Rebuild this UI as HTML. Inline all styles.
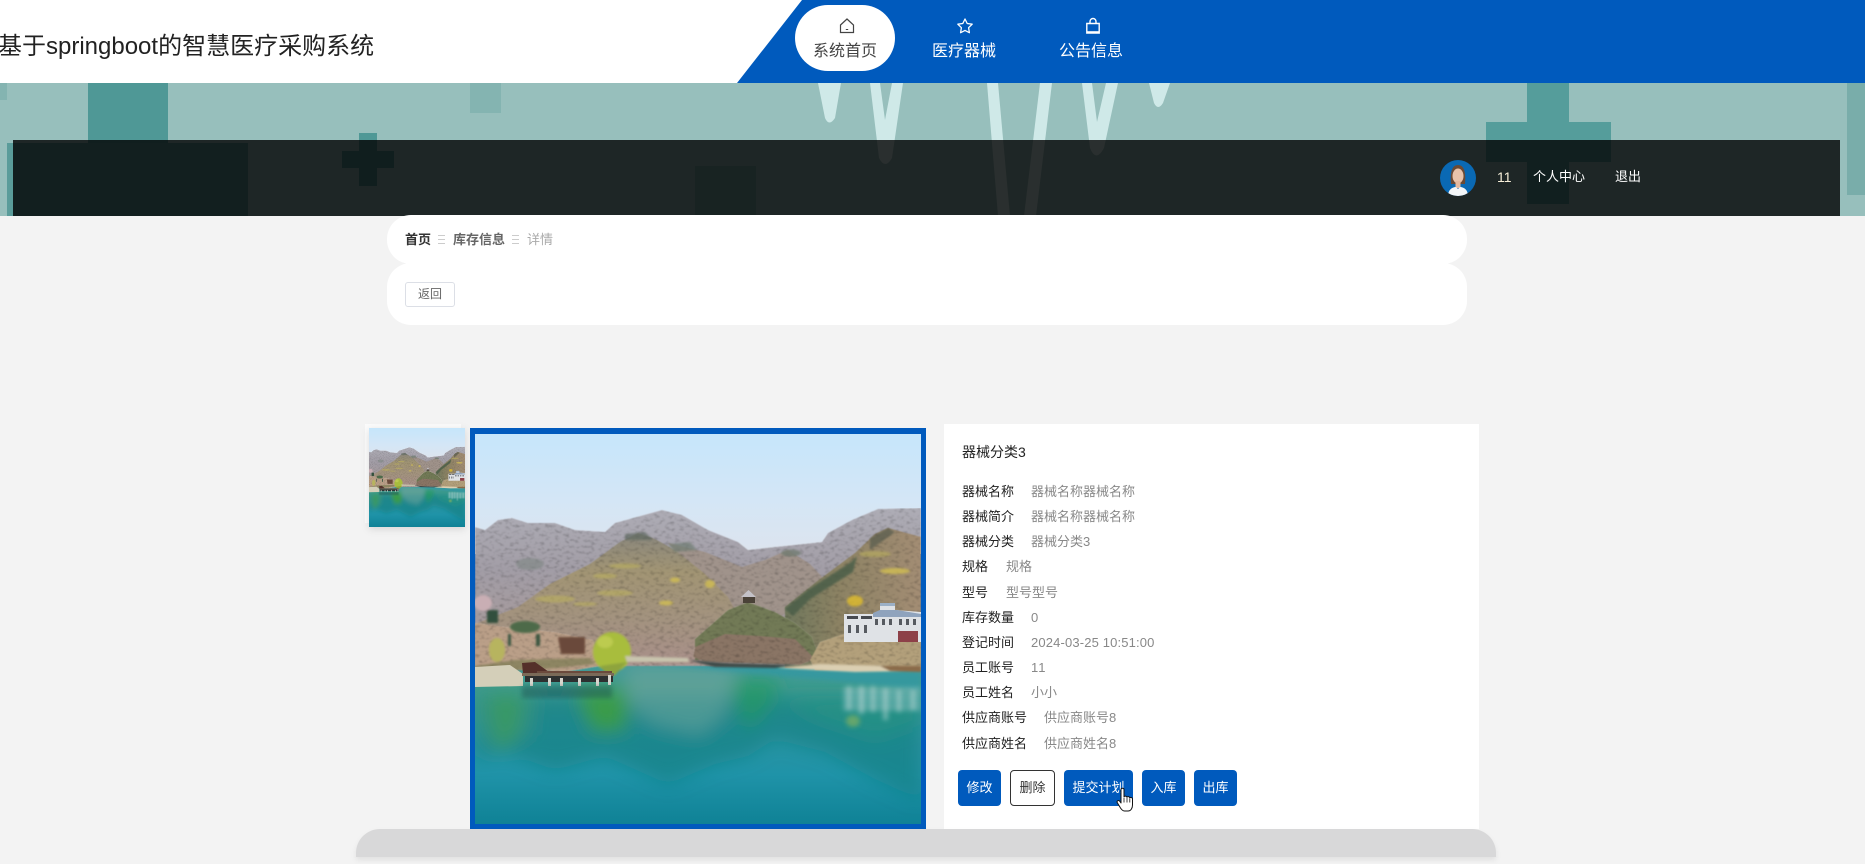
<!DOCTYPE html>
<html lang="zh">
<head>
<meta charset="utf-8">
<title>基于springboot的智慧医疗采购系统</title>
<style>
html,body{margin:0;padding:0;width:1865px;height:864px;overflow:hidden;background:#f3f3f3;}
body{position:relative;font-family:"Liberation Sans","Noto Sans CJK SC",sans-serif;}
.a{position:absolute;white-space:nowrap;}
svg{display:block;}
.nav{font-size:16px;line-height:22px;top:41px;color:#fff;}
.lb,.vl{font-size:13px;line-height:20px;}
.lb{left:962px;color:#222;}
.vl{color:#888;}
.btn{top:770px;height:36px;line-height:35px;text-align:center;font-size:13px;border-radius:4px;background:#005abd;color:#fff;box-sizing:border-box;}
</style>
</head>
<body>

<!-- hero -->
<div class="a" style="left:0;top:83px;width:1865px;height:133px;overflow:hidden;background:#97bfbc;">
<svg width="1865" height="133" viewBox="0 83 1865 133" style="position:absolute;left:0;top:0">
<rect x="0" y="83" width="7" height="17" fill="#84b4b1"/>
<rect x="88" y="83" width="80" height="62" fill="#4f9896"/>
<rect x="7" y="143" width="241" height="73" fill="#5a9c9a"/>
<rect x="470" y="83" width="31" height="30" fill="#84b4b1"/>
<rect x="359" y="133" width="18" height="53" fill="#4f9896"/>
<rect x="342" y="151" width="52" height="17" fill="#4f9896"/>
<rect x="695" y="166" width="61" height="50" fill="#4f9896" opacity=".45"/>
<rect x="1527" y="83" width="42" height="121" fill="#559d9b"/>
<rect x="1486" y="122" width="125" height="40" fill="#559d9b"/>
<rect x="1847" y="83" width="18" height="112" fill="#79adaa"/>
<g fill="#cfe9e8">
<path d="M818 83H841L835 118Q829 127 825 118Z"/>
<path d="M870 83H880L885 120L892 83H903L892 158Q885 170 879 158Z"/>
<path d="M987 83H998L1010 216H998Z"/>
<path d="M1040 83H1052L1036 216H1024Z"/>
<path d="M1082 83H1092L1097 122L1106 83H1118L1104 148Q1096 163 1090 148Z"/>
<path d="M1149 83H1170L1163 103Q1158 111 1154 103Z"/>
</g>
</svg>
<div class="a" style="left:13px;top:57px;width:1827px;height:76px;background:rgba(0,0,0,.8);"></div>
</div>

<!-- header -->
<div class="a" style="left:0;top:0;width:1865px;height:83px;background:#fff;"></div>
<svg class="a" style="left:0;top:0" width="1865" height="83"><polygon points="802,0 1865,0 1865,83 737,83" fill="#005abd"/></svg>
<div class="a" style="left:-2px;top:30px;font-size:24px;line-height:34px;color:#222;">基于springboot的智慧医疗采购系统</div>

<div class="a" style="left:795px;top:5px;width:100px;height:66px;border-radius:33px;background:#fff;"></div>
<svg class="a" style="left:838px;top:17px" width="18" height="18" viewBox="0 0 18 18" fill="none" stroke="#444" stroke-width="1.2"><path d="M2.500 8 9 2l6.500 6v7.500h-13z"/><path d="M7.800 12.500h2.400" stroke-width="1"/></svg>
<svg class="a" style="left:956px;top:17px" width="18" height="18" viewBox="0 0 18 18" fill="none" stroke="#fff" stroke-width="1.300" stroke-linejoin="round"><path d="M9 2l2.200 4.500 5 .7-3.600 3.500.8 5L9 13.400 4.600 15.700l.8-5L1.800 7.200l5-.7z"/></svg>
<svg class="a" style="left:1084px;top:17px" width="18" height="18" viewBox="0 0 18 18" fill="none" stroke="#fff" stroke-width="1.400"><path d="M2.800 6.500h12.400v9.500H2.800z"/><path d="M6 6.500V4.500a3 3 0 0 1 6 0v2"/><path d="M3 15h12" stroke-width="1.600"/></svg>
<div class="a nav" style="left:813px;color:#444;">系统首页</div>
<div class="a nav" style="left:932px;">医疗器械</div>
<div class="a nav" style="left:1059px;">公告信息</div>

<!-- user -->
<svg class="a" style="left:1440px;top:160px" width="36" height="36" viewBox="0 0 36 36">
<defs><clipPath id="av"><circle cx="18" cy="18" r="18"/></clipPath></defs>
<g clip-path="url(#av)">
<rect width="36" height="36" fill="#0a69b4"/>
<path d="M11 24C10 12 12 5 18 5s8 7 7 19z" fill="#6b4a35"/>
<ellipse cx="18" cy="16" rx="5.500" ry="7.500" fill="#e8c3ab"/>
<rect x="15.500" y="21" width="5" height="7" fill="#e3b9a0"/>
<path d="M8 36c0-6 4-9 8-9l2 2 2-2c4 0 8 3 8 9z" fill="#f4f6f8"/>
</g>
</svg>
<div class="a" style="left:1497px;top:167px;font-size:14px;line-height:20px;color:#f7efd9;">11</div>
<div class="a" style="left:1533px;top:167px;font-size:13px;line-height:20px;color:#fff;">个人中心</div>
<div class="a" style="left:1615px;top:167px;font-size:13px;line-height:20px;color:#fff;">退出</div>

<!-- cards -->
<div class="a" style="left:387px;top:215px;width:1080px;height:49px;background:#fff;border-radius:24px;"></div>
<div class="a" style="left:387px;top:263px;width:1080px;height:62px;background:#fff;border-radius:24px;"></div>
<div class="a" style="left:405px;top:230px;font-size:13px;line-height:20px;font-weight:700;color:#333;">首页</div>
<div class="a" style="left:438px;top:235px;width:7px;height:9px;border-top:1px solid #ccc;border-bottom:1px solid #ccc;box-sizing:border-box;"><div style="height:1px;background:#ccc;margin-top:3px"></div></div>
<div class="a" style="left:453px;top:230px;font-size:13px;line-height:20px;font-weight:700;color:#666;">库存信息</div>
<div class="a" style="left:512px;top:235px;width:7px;height:9px;border-top:1px solid #ccc;border-bottom:1px solid #ccc;box-sizing:border-box;"><div style="height:1px;background:#ccc;margin-top:3px"></div></div>
<div class="a" style="left:527px;top:230px;font-size:13px;line-height:20px;color:#aaa;">详情</div>
<div class="a" style="left:405px;top:282px;width:50px;height:25px;box-sizing:border-box;border:1px solid #dcdfe6;border-radius:3px;background:#fff;text-align:center;font-size:12px;line-height:22px;color:#666;">返回</div>

<!-- scene definition -->
<svg width="0" height="0" style="position:absolute">
<defs>
<linearGradient id="sky" x1="0" y1="0" x2="0" y2="1"><stop offset="0" stop-color="#c6e6fb"/><stop offset=".55" stop-color="#d4e6f6"/><stop offset="1" stop-color="#dde4ee"/></linearGradient>
<linearGradient id="back" x1="0" y1="0" x2="0" y2="1"><stop offset="0" stop-color="#aeadb6"/><stop offset=".4" stop-color="#a29da6"/><stop offset="1" stop-color="#a99894"/></linearGradient>
<linearGradient id="mid" x1="0" y1="0" x2="0" y2="1"><stop offset="0" stop-color="#8a877d"/><stop offset=".3" stop-color="#a29574"/><stop offset=".65" stop-color="#a3937f"/><stop offset="1" stop-color="#a9908a"/></linearGradient>
<linearGradient id="rh" x1="0" y1="0" x2="1" y2="0"><stop offset="0" stop-color="#6f775c"/><stop offset=".4" stop-color="#8d8364"/><stop offset="1" stop-color="#a38d74"/></linearGradient>
<linearGradient id="wat" x1="0" y1="0" x2="0" y2="1"><stop offset="0" stop-color="#459a9c"/><stop offset=".16" stop-color="#3f9a8e"/><stop offset=".4" stop-color="#2c94a0"/><stop offset=".7" stop-color="#1f93a8"/><stop offset="1" stop-color="#0f8296"/></linearGradient>
<filter id="tex" x="0" y="0" width="100%" height="100%" color-interpolation-filters="sRGB">
<feTurbulence type="fractalNoise" baseFrequency=".2 .34" numOctaves="3" seed="7" result="n"/>
<feColorMatrix in="n" type="matrix" values=".55 0 0 0 .72  .55 0 0 0 .72  .55 0 0 0 .72  0 0 0 0 1" result="g"/>
<feBlend in="SourceGraphic" in2="g" mode="multiply" result="m"/>
<feComposite in="m" in2="SourceAlpha" operator="in" result="c"/>
<feGaussianBlur in="c" stdDeviation=".6"/>
</filter>
<filter id="b8" x="-30%" y="-30%" width="160%" height="160%"><feGaussianBlur stdDeviation="9"/></filter>
<filter id="b3" x="-20%" y="-20%" width="140%" height="140%"><feGaussianBlur stdDeviation="2.500"/></filter>
<filter id="b1" x="-10%" y="-10%" width="120%" height="120%"><feGaussianBlur stdDeviation="1"/></filter>
<g id="scene">
<rect width="446" height="120" fill="url(#sky)"/>
<!-- water -->
<rect y="226" width="446" height="164" fill="url(#wat)"/>
<g filter="url(#b8)">
<path d="M0 262H446V366L400 345 350 318 300 305 273 322 240 330 193 350 130 322 80 336 30 318 0 325Z" fill="#137f80" opacity=".6"/>
<path d="M0 256H60L55 300 20 318 0 290Z" fill="#3e9a78" opacity=".6"/>
<path d="M16 262H46L36 312H24Z" fill="#3f9c50" opacity=".6"/>
<path d="M100 256H153L150 296 118 298Z" fill="#3f9f40" opacity=".85"/>
<path d="M150 232H262L250 280 225 300 180 290 152 270Z" fill="#7aa8a0" opacity=".5"/>
<path d="M258 245H305L296 270 273 296 262 270Z" fill="#259a60" opacity=".7"/>
<path d="M300 262H446V290L400 305 340 285Z" fill="#2b9580" opacity=".5"/>
</g>
<path d="M150 226 446 238V256L350 246 240 236Z" fill="#3398a4" opacity=".7" filter="url(#b3)"/>
<g filter="url(#b3)">
<rect x="368" y="253" width="78" height="24" fill="#a5cfd0" opacity=".35"/>
<g fill="#dce9e8" opacity=".4"><rect x="372" y="252" width="4" height="24"/><rect x="384" y="252" width="5" height="28"/><rect x="396" y="252" width="4" height="26"/><rect x="408" y="254" width="5" height="32"/><rect x="422" y="256" width="4" height="22"/><rect x="436" y="256" width="4" height="20"/></g>
<ellipse cx="378" cy="287" rx="7" ry="6" fill="#8fb55c" opacity=".6"/>
</g>
<!-- land -->
<g filter="url(#tex)">
<path d="M0 93 10 96 23 86 37 84 53 89 80 89 100 96 130 98 140 89 187 76 207 81 233 96 263 108 273 116 300 113 347 108 353 99 377 86 403 75 446 74V232H0Z" fill="url(#back)"/>
<path d="M193 109 230 118 267 133 290 126 313 116 335 130 350 146 325 172 290 190 250 170Z" fill="#a0938b"/>
<path d="M43 173 75 150 115 130 145 108 163 99 180 105 200 116 230 140 253 163 262 180 262 230H0V190Z" fill="url(#mid)"/>
<path d="M310 173 345 145 380 119 400 100 413 94 446 103V234H310Z" fill="url(#rh)"/>
</g>
<g filter="url(#b1)">
<path d="M310 175 333 156 376 128 382 122 378 138 335 165 318 182Z" fill="#4a5e49" opacity=".85"/>
<path d="M395 104 413 94 420 98 395 116Z" fill="#565a4c" opacity=".7"/>
<path d="M150 100 170 98 178 106 150 106Z" fill="#5e6a60" opacity=".7"/>
<path d="M193 110 215 108 222 116 200 118Z" fill="#6d7c72" opacity=".7"/>
<ellipse cx="55" cy="130" rx="14" ry="6" fill="#7d8682" opacity=".6"/>
<ellipse cx="316" cy="119" rx="10" ry="3.500" fill="#6f7a70" opacity=".8"/>
<g fill="#d2bf52" opacity=".8">
<ellipse cx="200" cy="146" rx="5" ry="2.500"/><ellipse cx="191" cy="169" rx="7" ry="2.500"/><ellipse cx="235" cy="150" rx="5" ry="4"/>
<ellipse cx="380" cy="167" rx="8" ry="5.500" fill="#e0bd2c"/><ellipse cx="420" cy="137" rx="15" ry="3"/>
</g>
<g fill="#bdb25c" opacity=".55">
<ellipse cx="140" cy="159" rx="18" ry="3"/><ellipse cx="80" cy="165" rx="20" ry="3.500"/><ellipse cx="110" cy="170" rx="12" ry="2"/><ellipse cx="150" cy="132" rx="16" ry="2.500"/><ellipse cx="130" cy="142" rx="12" ry="2.500"/><ellipse cx="400" cy="120" rx="16" ry="3"/>
</g>
</g>
<!-- lower foreground land -->
<g filter="url(#tex)">
<path d="M253 176 273 168 300 178 320 189 337 203 345 226H220V205Z" fill="#727a56"/>
<path d="M220 213 250 200 285 202 320 205 340 225 325 231 230 228 218 223Z" fill="#8a7565"/>
<path d="M335 226 345 208 369 200 446 206V236H340Z" fill="#b3a07b"/>
<path d="M0 189 30 193 80 198 118 206 125 232 90 238 50 236 0 236Z" fill="#ba9f88"/>
</g>
<g filter="url(#b1)">
<ellipse cx="8" cy="169" rx="9" ry="8" fill="#c9aeb4"/>
<rect x="12" y="176" width="11" height="13" fill="#33503c"/>
<ellipse cx="50" cy="193" rx="15" ry="6" fill="#4d6a48"/>
<rect x="33" y="200" width="3" height="12" fill="#3a5540"/><rect x="61" y="200" width="4" height="12" fill="#3a5540"/>
<path d="M83 203H110V220H86Z" fill="#6b4a3a"/>
<ellipse cx="22" cy="216" rx="8" ry="12" fill="#b7b45e"/>
<path d="M0 232 40 226 115 224 120 230 60 236 0 236Z" fill="#7a7a52" opacity=".7"/>
<ellipse cx="137" cy="218" rx="19" ry="20" fill="#a8bd3c"/>
<ellipse cx="130" cy="208" rx="8" ry="6" fill="#bccb50"/>
<path d="M125 232 152 228 140 241 133 242Z" fill="#8ea43e"/>
<path d="M150 222 213 224 214 228 152 228Z" fill="#c9c5ae"/>
<path d="M213 226 250 229 323 231 300 234 240 233Z" fill="#3d4b4a"/>
<path d="M303 234 345 230 446 233V237L380 238Z" fill="#dbcfb2"/>
<path d="M405 232H446V238L415 237Z" fill="#8a6a4a"/>
</g>
<!-- pagoda + building -->
<rect x="268" y="162" width="12" height="7" fill="#4a4238"/>
<path d="M266 163 273.500 156 281 163Z" fill="#c4c2c8"/>
<path d="M369 180H398L405 178V170H420V176L446 178V208H369Z" fill="#dfe2e6"/>
<path d="M398 179 405 176H422L446 180V183H398Z" fill="#8fa3bd"/>
<rect x="405" y="169" width="15" height="3" fill="#9cb0c6"/>
<rect x="372" y="182" width="11" height="3" fill="#46494f"/><rect x="386" y="182" width="11" height="3" fill="#46494f"/>
<g fill="#565a60"><rect x="373" y="191" width="3" height="8"/><rect x="381" y="191" width="3" height="8"/><rect x="389" y="191" width="3" height="8"/><rect x="400" y="185" width="3" height="6"/><rect x="407" y="185" width="3" height="6"/><rect x="414" y="185" width="3" height="6"/><rect x="424" y="185" width="3" height="6"/><rect x="431" y="185" width="3" height="6"/><rect x="438" y="185" width="3" height="6"/></g>
<rect x="423" y="197" width="20" height="11" fill="#8d4048"/>
<!-- left shore + pier -->
<path d="M0 233 35 231 48 240V252L0 253Z" fill="#d4cfb9"/>
<path d="M47 229 60 228 74 238 48 240Z" fill="#54302a"/>
<rect x="62" y="237" width="75" height="2" fill="#6b4a3c"/>
<rect x="47" y="239" width="92" height="3" fill="#7a6a58"/>
<rect x="50" y="242" width="88" height="6" fill="#2d3030"/>
<g fill="#d8d6ce"><rect x="55" y="244" width="3" height="8"/><rect x="73" y="244" width="3" height="8"/><rect x="85" y="244" width="3" height="8"/><rect x="103" y="244" width="3" height="8"/><rect x="121" y="244" width="3" height="8"/><rect x="133" y="241" width="3" height="10"/></g>
<rect x="47" y="252" width="90" height="12" fill="#123f42" opacity=".35" filter="url(#b3)"/>
</g>
</defs>
</svg>

<!-- thumbnail -->
<div class="a" style="left:365px;top:424px;width:96px;height:99px;background:#fbfbfb;"></div>
<svg class="a" style="left:369px;top:428px;filter:drop-shadow(0 2px 4px rgba(0,0,0,.12))" width="96" height="99" viewBox="0 0 446 390" preserveAspectRatio="none"><use href="#scene"/></svg>

<!-- main image -->
<div class="a" style="left:470px;top:428px;width:456px;height:401px;background:#005abd;"></div>
<svg class="a" style="left:475px;top:434px" width="446" height="390" viewBox="0 0 446 390" preserveAspectRatio="none"><use href="#scene"/></svg>

<!-- right panel -->
<div class="a" style="left:944px;top:424px;width:535px;height:405px;background:#fff;"></div>
<div class="a" style="left:962px;top:442px;font-size:14px;line-height:20px;color:#222;">器械分类3</div>

<div class="a lb" style="top:482px">器械名称</div><div class="a vl" style="left:1031px;top:482px">器械名称器械名称</div>
<div class="a lb" style="top:507px">器械简介</div><div class="a vl" style="left:1031px;top:507px">器械名称器械名称</div>
<div class="a lb" style="top:532px">器械分类</div><div class="a vl" style="left:1031px;top:532px">器械分类3</div>
<div class="a lb" style="top:557px">规格</div><div class="a vl" style="left:1006px;top:557px">规格</div>
<div class="a lb" style="top:583px">型号</div><div class="a vl" style="left:1006px;top:583px">型号型号</div>
<div class="a lb" style="top:608px">库存数量</div><div class="a vl" style="left:1031px;top:608px">0</div>
<div class="a lb" style="top:633px">登记时间</div><div class="a vl" style="left:1031px;top:633px;letter-spacing:.15px">2024-03-25 10:51:00</div>
<div class="a lb" style="top:658px">员工账号</div><div class="a vl" style="left:1031px;top:658px;letter-spacing:1px">11</div>
<div class="a lb" style="top:683px">员工姓名</div><div class="a vl" style="left:1031px;top:683px">小小</div>
<div class="a lb" style="top:708px">供应商账号</div><div class="a vl" style="left:1044px;top:708px">供应商账号8</div>
<div class="a lb" style="top:734px">供应商姓名</div><div class="a vl" style="left:1044px;top:734px">供应商姓名8</div>

<div class="a btn" style="left:958px;width:43px;">修改</div>
<div class="a btn" style="left:1010px;width:45px;background:#fff;color:#333;border:1px solid #333;line-height:34px;">删除</div>
<div class="a btn" style="left:1064px;width:69px;">提交计划</div>
<div class="a btn" style="left:1142px;width:43px;">入库</div>
<div class="a btn" style="left:1194px;width:43px;">出库</div>

<!-- cursor -->
<svg class="a" style="left:1116px;top:787px" width="18" height="25" viewBox="0 0 18 25" fill="#fff" stroke="#111" stroke-width="1" stroke-linejoin="round">
<path d="M5 2.500C5 .8 8 .8 8 2.500V10C8.500 8.800 10.500 8.800 11 10.300 11.500 9.300 13.300 9.300 13.800 10.800 14.500 10.100 16.500 10.500 16.500 12V18C16.500 21 15 24 12 24H8.500C6.500 24 5.500 22.500 4.500 21L1.200 15.500C.5 14 2.500 12.800 3.500 14L5 16Z"/>
<path d="M8 11V15.500M11 11V15.500M13.800 11.500V15.500" fill="none" stroke-width=".8"/>
</svg>

<!-- bottom bar -->
<div class="a" style="left:356px;top:829px;width:1140px;height:28px;background:#d8d8d9;border-radius:24px 24px 0 0;box-shadow:0 3px 6px rgba(0,0,0,.08);"></div>

</body>
</html>
